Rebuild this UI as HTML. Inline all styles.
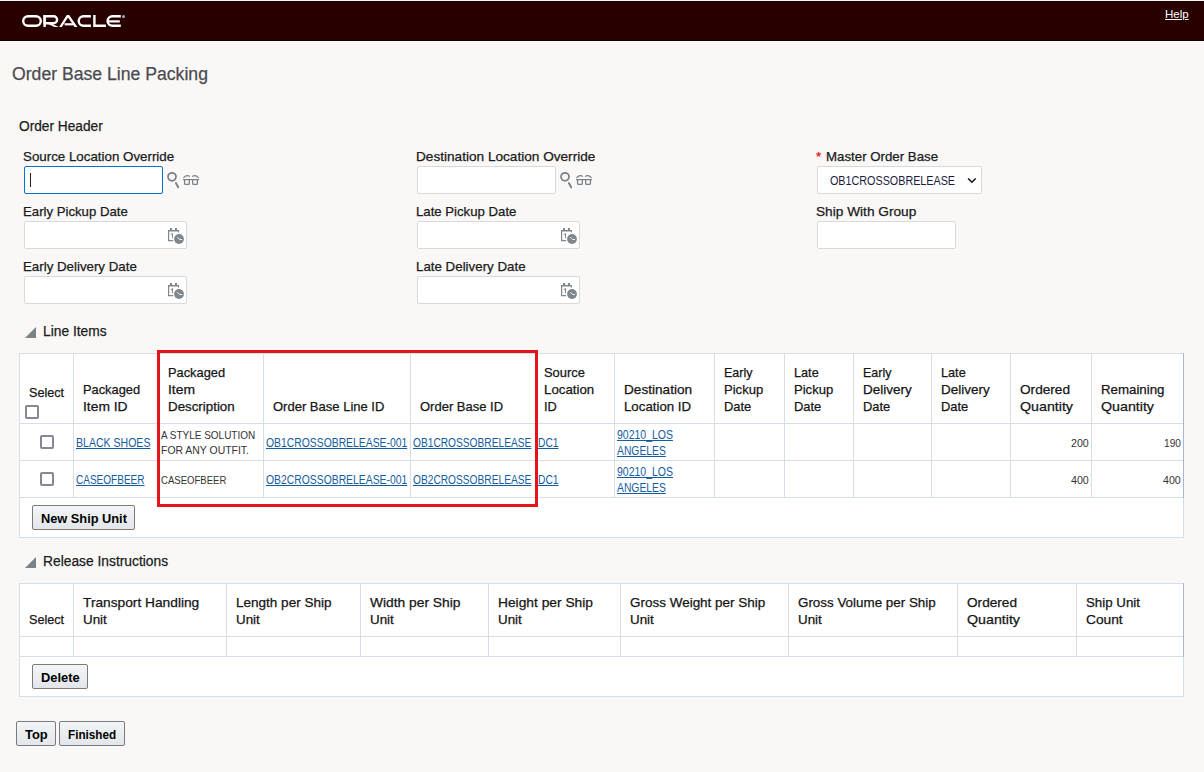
<!DOCTYPE html>
<html><head><meta charset="utf-8"><style>
html,body{margin:0;padding:0;width:1204px;height:772px;overflow:hidden;background:#f9f8f7;font-family:"Liberation Sans",sans-serif;}
body>div{position:absolute;box-sizing:content-box}
.t{white-space:nowrap;line-height:20px;transform-origin:0 0}
.s{-webkit-text-stroke:0.25px currentColor}
.btn{border:1px solid #7b7b7b;border-radius:2px;background:linear-gradient(#f3f5f7,#e2e6ea)}
</style></head><body>
<div style="left:0px;top:0px;width:1204px;height:1px;background:#f3f5f7;"></div>
<div style="left:0px;top:1px;width:1204px;height:1px;background:#1a0000;"></div>
<div style="left:0px;top:2px;width:1204px;height:38px;background:#280000;"></div>
<div style="left:0px;top:40px;width:1204px;height:1px;background:#170000;"></div>
<div style="left:0px;top:41px;width:1204px;height:1px;background:#ffffff;"></div>
<svg style="position:absolute;left:22px;top:15px" width="104" height="13" viewBox="0 0 104 13">
<rect x="1.2" y="1.2" width="17.6" height="9.6" rx="4.8" fill="none" stroke="#fff" stroke-width="2.4"/>
<g fill="#fff" fill-rule="evenodd">
<path d="M21.4 0H31.6A4.7 4.7 0 0 1 31.6 9.4H21.4z M23.8 2.4V7H31.6A2.3 2.3 0 0 0 31.6 2.4z"/>
<rect x="21.4" y="0" width="2.4" height="12"/>
<path d="M24.6 8.2L28.6 8.2L36.8 12H32.4z"/>
<path d="M37.2 12L44.8 0H47.2L55.4 12H52.6L46 2.6L39.8 12z"/>
<path d="M42.6 8.2H51.4V10.4H42.6z"/>
<path d="M68.9 0H61.5A6 6 0 0 0 61.5 12H68.9V9.6H61.5A3.6 3.6 0 0 1 61.5 2.4H68.9z"/>
<path d="M71.2 0H73.6V9.6H83.9V12H71.2z"/>
<path d="M98.8 0H90.4A6 6 0 0 0 90.4 12H98.8V9.6H90.4A3.6 3.6 0 0 1 90.4 2.4H98.8z"/>
<rect x="86" y="5.3" width="11.8" height="2.2"/>
</g></svg>
<div style="left:122px;top:15px;width:3px;height:3px;border-radius:50%;background:#aaa"></div>
<div class="t " style="left:1165px;top:4px;font-size:11.5px;color:#ffffff;transform:scaleX(0.9976);text-decoration:underline;">Help</div>
<div class="t  s" style="left:12px;top:64px;font-size:18px;color:#4b4b4f;transform:scaleX(0.9792);">Order Base Line Packing</div>
<div class="t  s" style="left:19px;top:116px;font-size:14px;color:#1b1b1b;transform:scaleX(0.9784);">Order Header</div>
<div class="t  s" style="left:23px;top:147px;font-size:13px;color:#1b1b1b;transform:scaleX(1.0254);">Source Location Override</div>
<div class="t  s" style="left:23px;top:202px;font-size:13px;color:#1b1b1b;transform:scaleX(1.0141);">Early Pickup Date</div>
<div class="t  s" style="left:23px;top:257px;font-size:13px;color:#1b1b1b;transform:scaleX(1.0226);">Early Delivery Date</div>
<div class="t  s" style="left:416px;top:147px;font-size:13px;color:#1b1b1b;transform:scaleX(1.0472);">Destination Location Override</div>
<div class="t  s" style="left:416px;top:202px;font-size:13px;color:#1b1b1b;transform:scaleX(1.0138);">Late Pickup Date</div>
<div class="t  s" style="left:416px;top:257px;font-size:13px;color:#1b1b1b;transform:scaleX(1.0246);">Late Delivery Date</div>
<div class="t  s" style="left:826px;top:147px;font-size:13px;color:#1b1b1b;transform:scaleX(1.0207);">Master Order Base</div>
<div class="t  s" style="left:816px;top:202px;font-size:13px;color:#1b1b1b;transform:scaleX(1.0515);">Ship With Group</div>
<div class="t  s" style="left:816px;top:147px;font-size:13px;color:#e0161d;transform:scaleX(1.0300);">*</div>
<div style="left:24px;top:166px;width:137px;height:26px;background:#fff;border:1px solid #0572ce;border-radius:2px"></div>
<div style="left:30px;top:173px;width:1px;height:14px;background:#222;"></div>
<svg style="position:absolute;left:167px;top:172px" width="14" height="17" viewBox="0 0 14 17"><circle cx="5" cy="4.8" r="4" fill="none" stroke="#7a8187" stroke-width="1.7"/><path d="M8.9 11 L11.2 15.3" stroke="#7a8187" stroke-width="1.9" stroke-linecap="round"/></svg>
<svg style="position:absolute;left:183px;top:175px" width="17" height="11" viewBox="0 0 17 11"><g fill="none" stroke="#7a8187" stroke-width="1.1"><path d="M0.4 2.8 Q2.5 0.4 5 0.6 Q6.2 0.8 6.6 1.9"/><path d="M15.6 2.8 Q13.5 0.4 11 0.6 Q9.8 0.8 9.4 1.9"/></g><path d="M0 4.6 H16" stroke="#7a8187" stroke-width="1.2"/><g fill="none" stroke="#7a8187" stroke-width="1.3"><path d="M1.6 4.6 V8.4 Q1.6 9.3 2.6 9.3 H5.4 Q6.3 9.3 6.3 8.4 V4.6"/><path d="M9.7 4.6 V8.4 Q9.7 9.3 10.7 9.3 H13.4 Q14.4 9.3 14.4 8.4 V4.6"/></g></svg>
<div style="left:417px;top:166px;width:137px;height:26px;background:#fff;border:1px solid #d9d9d9;border-radius:2px"></div>
<svg style="position:absolute;left:560px;top:172px" width="14" height="17" viewBox="0 0 14 17"><circle cx="5" cy="4.8" r="4" fill="none" stroke="#7a8187" stroke-width="1.7"/><path d="M8.9 11 L11.2 15.3" stroke="#7a8187" stroke-width="1.9" stroke-linecap="round"/></svg>
<svg style="position:absolute;left:576px;top:175px" width="17" height="11" viewBox="0 0 17 11"><g fill="none" stroke="#7a8187" stroke-width="1.1"><path d="M0.4 2.8 Q2.5 0.4 5 0.6 Q6.2 0.8 6.6 1.9"/><path d="M15.6 2.8 Q13.5 0.4 11 0.6 Q9.8 0.8 9.4 1.9"/></g><path d="M0 4.6 H16" stroke="#7a8187" stroke-width="1.2"/><g fill="none" stroke="#7a8187" stroke-width="1.3"><path d="M1.6 4.6 V8.4 Q1.6 9.3 2.6 9.3 H5.4 Q6.3 9.3 6.3 8.4 V4.6"/><path d="M9.7 4.6 V8.4 Q9.7 9.3 10.7 9.3 H13.4 Q14.4 9.3 14.4 8.4 V4.6"/></g></svg>
<div style="left:817px;top:166px;width:163px;height:26px;background:#fff;border:1px solid #d9d9d9;border-radius:2px"></div>
<div class="t " style="left:830px;top:171px;font-size:12px;color:#1b1b3b;transform:scaleX(0.8971);">OB1CROSSOBRELEASE</div>
<svg style="position:absolute;left:967px;top:177px" width="11" height="8" viewBox="0 0 11 8"><path d="M1.1 1.4 L4.9 5.3 L8.7 1.4" fill="none" stroke="#111" stroke-width="1.5"/></svg>
<div style="left:24px;top:221px;width:161px;height:26px;background:#fff;border:1px solid #d9d9d9;border-radius:2px"></div>
<svg style="position:absolute;left:168px;top:228px" width="17" height="17" viewBox="0 0 17 17"><g fill="#80878c"><rect x="2" y="0" width="2" height="2.5"/><rect x="7" y="0" width="2" height="2.5"/><path d="M0 2h11v2.6h-1V3.6H1.2v8.5H5.2v1.1H0z"/><path d="M2.6 6.2 L4.2 5.3 H5 V10.3 H4 V6.6 L2.9 7.1z"/></g><circle cx="11" cy="11" r="5.8" fill="#fff"/><circle cx="11" cy="11" r="4.9" fill="#80878c"/><path d="M9.4 9.2 L11.6 11.5 H14" fill="none" stroke="#fff" stroke-width="0.9"/></svg>
<div style="left:417px;top:221px;width:161px;height:26px;background:#fff;border:1px solid #d9d9d9;border-radius:2px"></div>
<svg style="position:absolute;left:561px;top:228px" width="17" height="17" viewBox="0 0 17 17"><g fill="#80878c"><rect x="2" y="0" width="2" height="2.5"/><rect x="7" y="0" width="2" height="2.5"/><path d="M0 2h11v2.6h-1V3.6H1.2v8.5H5.2v1.1H0z"/><path d="M2.6 6.2 L4.2 5.3 H5 V10.3 H4 V6.6 L2.9 7.1z"/></g><circle cx="11" cy="11" r="5.8" fill="#fff"/><circle cx="11" cy="11" r="4.9" fill="#80878c"/><path d="M9.4 9.2 L11.6 11.5 H14" fill="none" stroke="#fff" stroke-width="0.9"/></svg>
<div style="left:24px;top:276px;width:161px;height:26px;background:#fff;border:1px solid #d9d9d9;border-radius:2px"></div>
<svg style="position:absolute;left:168px;top:283px" width="17" height="17" viewBox="0 0 17 17"><g fill="#80878c"><rect x="2" y="0" width="2" height="2.5"/><rect x="7" y="0" width="2" height="2.5"/><path d="M0 2h11v2.6h-1V3.6H1.2v8.5H5.2v1.1H0z"/><path d="M2.6 6.2 L4.2 5.3 H5 V10.3 H4 V6.6 L2.9 7.1z"/></g><circle cx="11" cy="11" r="5.8" fill="#fff"/><circle cx="11" cy="11" r="4.9" fill="#80878c"/><path d="M9.4 9.2 L11.6 11.5 H14" fill="none" stroke="#fff" stroke-width="0.9"/></svg>
<div style="left:417px;top:276px;width:161px;height:26px;background:#fff;border:1px solid #d9d9d9;border-radius:2px"></div>
<svg style="position:absolute;left:561px;top:283px" width="17" height="17" viewBox="0 0 17 17"><g fill="#80878c"><rect x="2" y="0" width="2" height="2.5"/><rect x="7" y="0" width="2" height="2.5"/><path d="M0 2h11v2.6h-1V3.6H1.2v8.5H5.2v1.1H0z"/><path d="M2.6 6.2 L4.2 5.3 H5 V10.3 H4 V6.6 L2.9 7.1z"/></g><circle cx="11" cy="11" r="5.8" fill="#fff"/><circle cx="11" cy="11" r="4.9" fill="#80878c"/><path d="M9.4 9.2 L11.6 11.5 H14" fill="none" stroke="#fff" stroke-width="0.9"/></svg>
<div style="left:817px;top:221px;width:137px;height:26px;background:#fff;border:1px solid #d9d9d9;border-radius:2px"></div>
<svg style="position:absolute;left:25px;top:327px" width="12" height="12" viewBox="0 0 12 12"><path d="M11 0 V11 H0z" fill="#7b8288"/></svg>
<div class="t  s" style="left:43px;top:321px;font-size:14px;color:#1b1b1b;transform:scaleX(0.9851);">Line Items</div>
<svg style="position:absolute;left:25px;top:557px" width="12" height="12" viewBox="0 0 12 12"><path d="M11 0 V11 H0z" fill="#7b8288"/></svg>
<div class="t  s" style="left:43px;top:551px;font-size:14px;color:#1b1b1b;transform:scaleX(0.9858);">Release Instructions</div>
<div style="left:19px;top:353px;width:1165px;height:185px;background:#fff;"></div>
<div style="left:19px;top:353px;width:1165px;height:1px;background:#d6dfe6;"></div>
<div style="left:19px;top:423px;width:1165px;height:1px;background:#d6dfe6;"></div>
<div style="left:19px;top:460px;width:1165px;height:1px;background:#d6dfe6;"></div>
<div style="left:19px;top:497px;width:1165px;height:1px;background:#d6dfe6;"></div>
<div style="left:19px;top:537px;width:1165px;height:1px;background:#d6dfe6;"></div>
<div style="left:19px;top:353px;width:1px;height:185px;background:#d6dfe6;"></div>
<div style="left:1183px;top:497px;width:1px;height:41px;background:#d6dfe6;"></div>
<div style="left:1183px;top:353px;width:1px;height:145px;background:#aab6d8;"></div>
<div style="left:73px;top:353px;width:1px;height:145px;background:#d6dfe6;"></div>
<div style="left:158px;top:353px;width:1px;height:145px;background:#d6dfe6;"></div>
<div style="left:263px;top:353px;width:1px;height:145px;background:#d6dfe6;"></div>
<div style="left:410px;top:353px;width:1px;height:145px;background:#d6dfe6;"></div>
<div style="left:535px;top:353px;width:1px;height:145px;background:#d6dfe6;"></div>
<div style="left:614px;top:353px;width:1px;height:145px;background:#d6dfe6;"></div>
<div style="left:714px;top:353px;width:1px;height:145px;background:#d6dfe6;"></div>
<div style="left:784px;top:353px;width:1px;height:145px;background:#d6dfe6;"></div>
<div style="left:853px;top:353px;width:1px;height:145px;background:#d6dfe6;"></div>
<div style="left:931px;top:353px;width:1px;height:145px;background:#d6dfe6;"></div>
<div style="left:1010px;top:353px;width:1px;height:145px;background:#d6dfe6;"></div>
<div style="left:1091px;top:353px;width:1px;height:145px;background:#d6dfe6;"></div>
<div class="t  s" style="left:29px;top:383px;font-size:13px;color:#161616;transform:scaleX(0.9684);">Select</div>
<div style="left:25px;top:405px;width:10px;height:10px;border:2px solid #868695;border-radius:2px;background:#fff"></div>
<div class="t  s" style="left:83px;top:380px;font-size:13px;color:#161616;transform:scaleX(0.9871);">Packaged</div>
<div class="t  s" style="left:83px;top:397px;font-size:13px;color:#161616;transform:scaleX(1.0647);">Item ID</div>
<div class="t  s" style="left:168px;top:363px;font-size:13px;color:#161616;transform:scaleX(0.9871);">Packaged</div>
<div class="t  s" style="left:168px;top:380px;font-size:13px;color:#161616;transform:scaleX(1.0680);">Item</div>
<div class="t  s" style="left:168px;top:397px;font-size:13px;color:#161616;transform:scaleX(1.0254);">Description</div>
<div class="t  s" style="left:273px;top:397px;font-size:13px;color:#161616;transform:scaleX(1.0009);">Order Base Line ID</div>
<div class="t  s" style="left:420px;top:397px;font-size:13px;color:#161616;transform:scaleX(1.0001);">Order Base ID</div>
<div class="t  s" style="left:544px;top:363px;font-size:13px;color:#161616;transform:scaleX(0.9926);">Source</div>
<div class="t  s" style="left:544px;top:380px;font-size:13px;color:#161616;transform:scaleX(1.0209);">Location</div>
<div class="t  s" style="left:544px;top:397px;font-size:13px;color:#161616;transform:scaleX(0.9846);">ID</div>
<div class="t  s" style="left:624px;top:380px;font-size:13px;color:#161616;transform:scaleX(1.0467);">Destination</div>
<div class="t  s" style="left:624px;top:397px;font-size:13px;color:#161616;transform:scaleX(1.0200);">Location ID</div>
<div class="t  s" style="left:724px;top:363px;font-size:13px;color:#161616;transform:scaleX(0.9586);">Early</div>
<div class="t  s" style="left:724px;top:380px;font-size:13px;color:#161616;transform:scaleX(1.0043);">Pickup</div>
<div class="t  s" style="left:724px;top:397px;font-size:13px;color:#161616;transform:scaleX(0.9939);">Date</div>
<div class="t  s" style="left:794px;top:363px;font-size:13px;color:#161616;transform:scaleX(0.9758);">Late</div>
<div class="t  s" style="left:794px;top:380px;font-size:13px;color:#161616;transform:scaleX(1.0043);">Pickup</div>
<div class="t  s" style="left:794px;top:397px;font-size:13px;color:#161616;transform:scaleX(0.9939);">Date</div>
<div class="t  s" style="left:863px;top:363px;font-size:13px;color:#161616;transform:scaleX(0.9586);">Early</div>
<div class="t  s" style="left:863px;top:380px;font-size:13px;color:#161616;transform:scaleX(1.0369);">Delivery</div>
<div class="t  s" style="left:863px;top:397px;font-size:13px;color:#161616;transform:scaleX(0.9939);">Date</div>
<div class="t  s" style="left:941px;top:363px;font-size:13px;color:#161616;transform:scaleX(0.9758);">Late</div>
<div class="t  s" style="left:941px;top:380px;font-size:13px;color:#161616;transform:scaleX(1.0369);">Delivery</div>
<div class="t  s" style="left:941px;top:397px;font-size:13px;color:#161616;transform:scaleX(0.9939);">Date</div>
<div class="t  s" style="left:1020px;top:380px;font-size:13px;color:#161616;transform:scaleX(1.0481);">Ordered</div>
<div class="t  s" style="left:1020px;top:397px;font-size:13px;color:#161616;transform:scaleX(1.0945);">Quantity</div>
<div class="t  s" style="left:1101px;top:380px;font-size:13px;color:#161616;transform:scaleX(1.0214);">Remaining</div>
<div class="t  s" style="left:1101px;top:397px;font-size:13px;color:#161616;transform:scaleX(1.0945);">Quantity</div>
<div style="left:40px;top:435px;width:10px;height:10px;border:2px solid #868695;border-radius:2px;background:#fff"></div>
<div class="t " style="left:76px;top:433px;font-size:12px;color:#145c9e;transform:scaleX(0.8787);text-decoration:underline;">BLACK SHOES</div>
<div class="t " style="left:161px;top:425px;font-size:11px;color:#333333;transform:scaleX(0.9059);">A STYLE SOLUTION</div>
<div class="t " style="left:161px;top:440px;font-size:11px;color:#333333;transform:scaleX(0.9491);">FOR ANY OUTFIT.</div>
<div class="t " style="left:266px;top:433px;font-size:12px;color:#145c9e;transform:scaleX(0.8644);text-decoration:underline;">OB1CROSSOBRELEASE-001</div>
<div class="t " style="left:413px;top:433px;font-size:12px;color:#145c9e;transform:scaleX(0.8490);text-decoration:underline;">OB1CROSSOBRELEASE</div>
<div class="t " style="left:538px;top:433px;font-size:12px;color:#145c9e;transform:scaleX(0.8536);text-decoration:underline;">DC1</div>
<div class="t " style="left:617px;top:425px;font-size:12px;color:#145c9e;transform:scaleX(0.8730);text-decoration:underline;">90210_LOS</div>
<div class="t " style="left:617px;top:441px;font-size:12px;color:#145c9e;transform:scaleX(0.8611);text-decoration:underline;">ANGELES</div>
<div style="left:40px;top:472px;width:10px;height:10px;border:2px solid #868695;border-radius:2px;background:#fff"></div>
<div class="t " style="left:76px;top:470px;font-size:12px;color:#145c9e;transform:scaleX(0.8354);text-decoration:underline;">CASEOFBEER</div>
<div class="t " style="left:161px;top:470px;font-size:11px;color:#333333;transform:scaleX(0.8695);">CASEOFBEER</div>
<div class="t " style="left:266px;top:470px;font-size:12px;color:#145c9e;transform:scaleX(0.8644);text-decoration:underline;">OB2CROSSOBRELEASE-001</div>
<div class="t " style="left:413px;top:470px;font-size:12px;color:#145c9e;transform:scaleX(0.8490);text-decoration:underline;">OB2CROSSOBRELEASE</div>
<div class="t " style="left:538px;top:470px;font-size:12px;color:#145c9e;transform:scaleX(0.8536);text-decoration:underline;">DC1</div>
<div class="t " style="left:617px;top:462px;font-size:12px;color:#145c9e;transform:scaleX(0.8730);text-decoration:underline;">90210_LOS</div>
<div class="t " style="left:617px;top:478px;font-size:12px;color:#145c9e;transform:scaleX(0.8611);text-decoration:underline;">ANGELES</div>
<div class="t " style="left:1071.2px;top:433px;font-size:11px;color:#333333;transform:scaleX(0.9687);">200</div>
<div class="t " style="left:1164px;top:433px;font-size:11px;color:#333333;transform:scaleX(0.9252);">190</div>
<div class="t " style="left:1071.2px;top:470px;font-size:11px;color:#333333;transform:scaleX(0.9687);">400</div>
<div class="t " style="left:1163.2px;top:470px;font-size:11px;color:#333333;transform:scaleX(0.9687);">400</div>
<div class="btn" style="left:32px;top:505px;width:101px;height:23px"></div>
<div class="t " style="left:41px;top:509px;font-size:12px;color:#000;font-weight:bold;transform:scaleX(1.0652);">New Ship Unit</div>
<div style="left:157px;top:350px;width:375px;height:151px;border:3px solid #e3141c"></div>
<div style="left:19px;top:583px;width:1165px;height:114px;background:#fff;"></div>
<div style="left:19px;top:583px;width:1165px;height:1px;background:#d6dfe6;"></div>
<div style="left:19px;top:636px;width:1165px;height:1px;background:#d6dfe6;"></div>
<div style="left:19px;top:656px;width:1165px;height:1px;background:#d6dfe6;"></div>
<div style="left:19px;top:696px;width:1165px;height:1px;background:#d6dfe6;"></div>
<div style="left:19px;top:583px;width:1px;height:114px;background:#d6dfe6;"></div>
<div style="left:1183px;top:656px;width:1px;height:41px;background:#d6dfe6;"></div>
<div style="left:1183px;top:583px;width:1px;height:74px;background:#aab6d8;"></div>
<div style="left:73px;top:583px;width:1px;height:74px;background:#d6dfe6;"></div>
<div style="left:226px;top:583px;width:1px;height:74px;background:#d6dfe6;"></div>
<div style="left:360px;top:583px;width:1px;height:74px;background:#d6dfe6;"></div>
<div style="left:488px;top:583px;width:1px;height:74px;background:#d6dfe6;"></div>
<div style="left:620px;top:583px;width:1px;height:74px;background:#d6dfe6;"></div>
<div style="left:788px;top:583px;width:1px;height:74px;background:#d6dfe6;"></div>
<div style="left:957px;top:583px;width:1px;height:74px;background:#d6dfe6;"></div>
<div style="left:1076px;top:583px;width:1px;height:74px;background:#d6dfe6;"></div>
<div class="t  s" style="left:29px;top:610px;font-size:13px;color:#161616;transform:scaleX(0.9684);">Select</div>
<div class="t  s" style="left:83px;top:593px;font-size:13px;color:#161616;transform:scaleX(1.0562);">Transport Handling</div>
<div class="t  s" style="left:83px;top:610px;font-size:13px;color:#161616;transform:scaleX(1.0300);">Unit</div>
<div class="t  s" style="left:236px;top:593px;font-size:13px;color:#161616;transform:scaleX(1.0400);">Length per Ship</div>
<div class="t  s" style="left:236px;top:610px;font-size:13px;color:#161616;transform:scaleX(1.0300);">Unit</div>
<div class="t  s" style="left:370px;top:593px;font-size:13px;color:#161616;transform:scaleX(1.0612);">Width per Ship</div>
<div class="t  s" style="left:370px;top:610px;font-size:13px;color:#161616;transform:scaleX(1.0300);">Unit</div>
<div class="t  s" style="left:498px;top:593px;font-size:13px;color:#161616;transform:scaleX(1.0598);">Height per Ship</div>
<div class="t  s" style="left:498px;top:610px;font-size:13px;color:#161616;transform:scaleX(1.0300);">Unit</div>
<div class="t  s" style="left:630px;top:593px;font-size:13px;color:#161616;transform:scaleX(1.0363);">Gross Weight per Ship</div>
<div class="t  s" style="left:630px;top:610px;font-size:13px;color:#161616;transform:scaleX(1.0300);">Unit</div>
<div class="t  s" style="left:798px;top:593px;font-size:13px;color:#161616;transform:scaleX(1.0299);">Gross Volume per Ship</div>
<div class="t  s" style="left:798px;top:610px;font-size:13px;color:#161616;transform:scaleX(1.0300);">Unit</div>
<div class="t  s" style="left:967px;top:593px;font-size:13px;color:#161616;transform:scaleX(1.0481);">Ordered</div>
<div class="t  s" style="left:967px;top:610px;font-size:13px;color:#161616;transform:scaleX(1.0945);">Quantity</div>
<div class="t  s" style="left:1086px;top:593px;font-size:13px;color:#161616;transform:scaleX(1.0234);">Ship Unit</div>
<div class="t  s" style="left:1086px;top:610px;font-size:13px;color:#161616;transform:scaleX(1.0575);">Count</div>
<div class="btn" style="left:32px;top:664px;width:54px;height:23px"></div>
<div class="t " style="left:41px;top:668px;font-size:12px;color:#000;font-weight:bold;transform:scaleX(1.0718);">Delete</div>
<div class="btn" style="left:16px;top:721px;width:38px;height:23px"></div>
<div class="t " style="left:25px;top:725px;font-size:12px;color:#000;font-weight:bold;transform:scaleX(1.0761);">Top</div>
<div class="btn" style="left:59px;top:721px;width:64px;height:23px"></div>
<div class="t " style="left:68px;top:725px;font-size:12px;color:#000;font-weight:bold;transform:scaleX(0.9754);">Finished</div>
</body></html>
